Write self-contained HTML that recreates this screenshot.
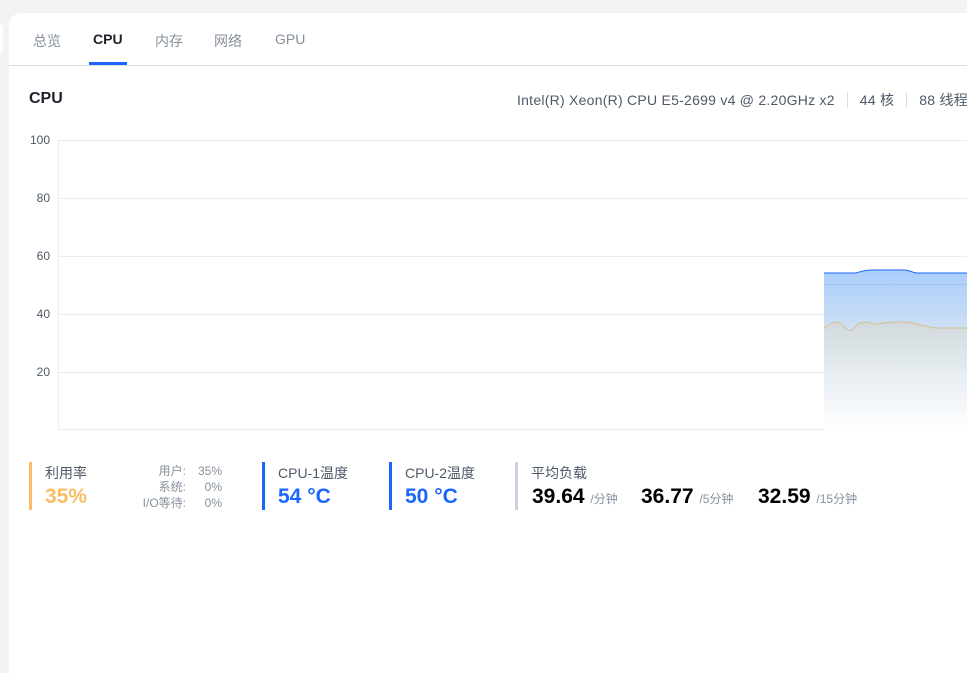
<!DOCTYPE html>
<html><head><meta charset="utf-8"><style>
*{margin:0;padding:0;box-sizing:border-box}
body{width:967px;height:654px;background:#f2f3f5;font-family:"Liberation Sans","Noto Sans CJK SC",sans-serif;position:relative;overflow:hidden;color:#1d2129}
.card{position:absolute;left:9px;top:13px;width:970px;height:660px;background:#fff;border-radius:12px 0 0 0}
.tabs{position:absolute;left:0;top:0;width:100%;height:53px;border-bottom:1px solid #dcdde0}
.tab{position:absolute;top:17px;font-size:14px;color:#86909c}
.tab.a{color:#1d2129;font-weight:bold}
.ul{position:absolute;left:80px;top:49px;width:38px;height:3px;background:#1a66ff}
.abs{position:absolute;white-space:nowrap}
.bar{position:absolute;width:3px;height:48px}
.big{font-size:21px;font-weight:bold}
</style></head><body>
<div class="abs" style="left:0;top:25px;width:3px;height:28px;background:#fff"></div>
<div class="card">
<div class="tabs">
<span class="tab" style="left:24px;top:18px">总览</span>
<span class="tab a" style="left:84px;top:18px">CPU</span>
<span class="tab" style="left:146px;top:18px">内存</span>
<span class="tab" style="left:205px;top:18px">网络</span>
<span class="tab" style="left:266px;top:18px">GPU</span>
<div class="ul"></div>
</div>
<div class="abs" style="left:20px;top:77px;font-size:16px;font-weight:bold">CPU</div>
<div class="abs" style="left:508px;top:77px;font-size:14px;letter-spacing:0.25px;color:#4e5969">Intel(R) Xeon(R) CPU E5-2699 v4 @ 2.20GHz x2<span style="display:inline-block;width:1px;height:16px;background:#dcdde0;margin:0 12px;vertical-align:-3px"></span>44 核<span style="display:inline-block;width:1px;height:16px;background:#dcdde0;margin:0 12px;vertical-align:-3px"></span>88 线程</div>
</div>
<svg class="abs" style="left:0;top:0" width="967" height="654">
<defs>
<linearGradient id="g1" x1="0" y1="0" x2="0" y2="1"><stop offset="0" stop-color="#a9cdfb"/><stop offset="0.5" stop-color="#dbe7f3"/><stop offset="1" stop-color="#ffffff"/></linearGradient>
<linearGradient id="g2" x1="0" y1="0" x2="0" y2="1"><stop offset="0" stop-color="#d3d8d6" stop-opacity=".8"/><stop offset="1" stop-color="#ffffff" stop-opacity="0"/></linearGradient>
</defs>
<g stroke="#ececec" stroke-width="1">
<line x1="58" y1="140.5" x2="967" y2="140.5"/><line x1="58" y1="198.5" x2="967" y2="198.5"/><line x1="58" y1="256.5" x2="967" y2="256.5"/><line x1="58" y1="314.5" x2="967" y2="314.5"/><line x1="58" y1="372.5" x2="967" y2="372.5"/><line x1="58" y1="429.5" x2="967" y2="429.5"/><line x1="58.5" y1="140" x2="58.5" y2="430"/>
</g>
<g font-size="12" fill="#4e5969" text-anchor="end">
<text x="50" y="144">100</text><text x="50" y="202">80</text><text x="50" y="260">60</text><text x="50" y="318">40</text><text x="50" y="376">20</text>
</g>
<path d="M824 273 L856 273 C862 271 866 270 872 270 L904 270 C910 270 912 273 918 273 L967 273 L967 430 L824 430Z" fill="url(#g1)"/>
<path d="M824 328 C832 322 838 320 844 326 C850 334 852 330 858 324 C864 320 870 324 878 324 C886 322 892 322 904 322 C914 322 922 326 936 328 L967 328 L967 430 L824 430Z" fill="url(#g2)"/>
<line x1="824" y1="284.5" x2="967" y2="284.5" stroke="#9ccbef" stroke-width="1"/>
<path d="M824 273 L856 273 C862 271 866 270 872 270 L904 270 C910 270 912 273 918 273 L967 273" fill="none" stroke="#1a66ff" stroke-width="1"/>
<path d="M824 328 C832 322 838 320 844 326 C850 334 852 330 858 324 C864 320 870 324 878 324 C886 322 892 322 904 322 C914 322 922 326 936 328 L967 328" fill="none" stroke="#d6c08f" stroke-width="1"/>
</svg>
<div class="bar" style="left:29px;top:462px;background:#fbbd63"></div>
<div class="abs" style="left:45px;top:463px;font-size:14px;color:#4e5969">利用率</div>
<div class="abs big" style="left:45px;top:485px;color:#fbbd63">35%</div>
<div class="abs" style="left:120px;top:463px;width:66px;text-align:right;font-size:12px;line-height:16px;color:#86909c">用户:<br>系统:<br>I/O等待:</div>
<div class="abs" style="left:190px;top:463px;width:32px;text-align:right;font-size:12px;line-height:16px;color:#86909c">35%<br>0%<br>0%</div>
<div class="bar" style="left:262px;top:462px;background:#1a66ff"></div>
<div class="abs" style="left:278px;top:463px;font-size:14px;color:#4e5969">CPU-1温度</div>
<div class="abs big" style="left:278px;top:485px;color:#1a66ff">54 °C</div>
<div class="bar" style="left:389px;top:462px;background:#1a66ff"></div>
<div class="abs" style="left:405px;top:463px;font-size:14px;color:#4e5969">CPU-2温度</div>
<div class="abs big" style="left:405px;top:485px;color:#1a66ff">50 °C</div>
<div class="bar" style="left:515px;top:462px;background:#c9d3e0"></div>
<div class="abs" style="left:531px;top:463px;font-size:14px;color:#4e5969">平均负载</div>
<div class="abs big" style="left:532px;top:485px;color:#000">39.64 <span style="font-size:12px;font-weight:normal;color:#86909c">/分钟</span></div>
<div class="abs big" style="left:641px;top:485px;color:#000">36.77 <span style="font-size:12px;font-weight:normal;color:#86909c">/5分钟</span></div>
<div class="abs big" style="left:758px;top:485px;color:#000">32.59 <span style="font-size:12px;font-weight:normal;color:#86909c">/15分钟</span></div>
</body></html>
